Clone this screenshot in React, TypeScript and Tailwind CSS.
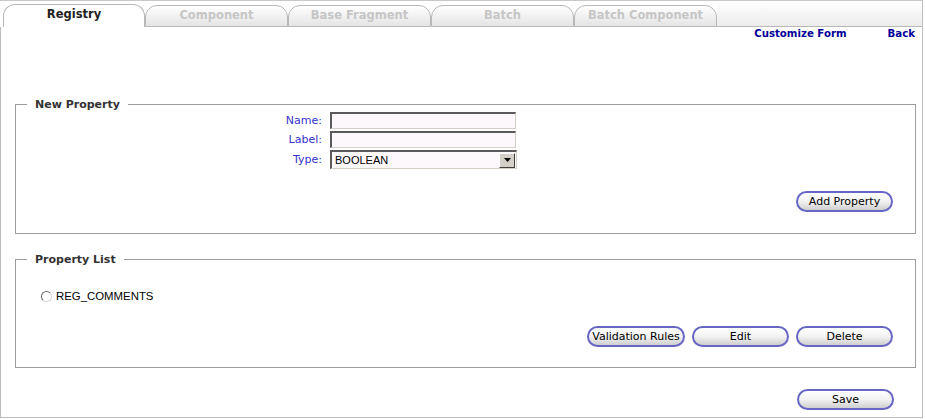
import React from "react";

const V = { fontFamily: '"DejaVu Sans", Verdana, sans-serif' };
const A = { fontFamily: '"Liberation Sans", Arial, sans-serif' };

function PillButton({ label, w = "w-[97px]" }: { label: string; w?: string }) {
  return (
    <button
      type="button"
      style={V}
      className={`${w} h-[21px] rounded-full border-2 border-[#6666c4] bg-gradient-to-b from-white via-[#f2f2f2] to-[#cfcfcf] text-[11px] leading-[13px] text-black flex items-center justify-center shadow-[inset_0_1px_0_#ffffff]`}
    >
      {label}
    </button>
  );
}

function Tab({ label, active }: { label: string; active?: boolean }) {
  if (active) {
    return (
      <div
        style={V}
        className="ml-[3px] w-[142px] h-[23px] rounded-t-[12px] border-t border-l border-r border-[#b8b8b8] bg-white flex items-center justify-center text-[11.5px] font-bold text-[#222] pb-[2px]"
      >
        {label}
      </div>
    );
  }
  return (
    <div
      style={V}
      className="w-[143px] h-[22px] rounded-t-[12px] border border-[#b8b8b8] bg-gradient-to-b from-white to-[#e4e4e4] flex items-center justify-center text-[11.5px] font-bold text-[#c6c6c6] pb-[1px]"
    >
      {label}
    </div>
  );
}

function Field({ select }: { select?: boolean }) {
  if (select) {
    return (
      <div className="w-[187px] h-[19px] border-t-2 border-l-2 border-b border-r border-t-[#5a5a5a] border-l-[#5a5a5a] border-b-[#d4d0c8] border-r-[#d4d0c8] bg-[#fcf8fc] flex items-center">
        <span style={A} className="flex-1 pl-[3px] text-[11px] leading-[13px] text-black">
          BOOLEAN
        </span>
        <div className="w-[16px] h-[15px] mr-[1px] bg-[#d4d0c8] border-t border-l border-t-white border-l-white border-b border-r border-b-[#404040] border-r-[#404040] flex items-center justify-center">
          <svg width="7" height="4" viewBox="0 0 7 4">
            <path d="M0 0H7L3.5 4Z" fill="#000" />
          </svg>
        </div>
      </div>
    );
  }
  return (
    <div className="w-[186px] h-[17px] border-t-2 border-l-2 border-b border-r border-t-[#5a5a5a] border-l-[#5a5a5a] border-b-[#d4d0c8] border-r-[#d4d0c8] bg-[#fcf8fc]" />
  );
}

export default function App() {
  return (
    <div className="w-[923px] h-[418px] flex flex-col bg-white border-r border-[#bdbdbd]">
      {/* tab strip */}
      <div className="h-[27px] flex items-end border-t border-[#c8c8c8]">
        <Tab label="Registry" active />
        <Tab label="Component" />
        <Tab label="Base Fragment" />
        <Tab label="Batch" />
        <Tab label="Batch Component" />
        <div className="flex-1 h-full border-b border-[#b8b8b8] bg-gradient-to-b from-white to-[#ececec]" />
      </div>

      {/* body */}
      <div className="flex-1 flex flex-col border-l border-b border-[#bdbdbd]">
        <div style={V} className="h-[13px] flex justify-end gap-[41px] pr-[7px] text-[10.2px] leading-[13px] font-bold text-[#000099]">
          <span>Customize Form</span>
          <span>Back</span>
        </div>

        <fieldset className="mt-[58px] ml-[14px] mr-[6px] border border-[#9c9c9c] flex flex-col">
          <legend style={V} className="ml-[11px] px-[8px] text-[11px] leading-[13px] font-bold text-[#333]">
            New Property
          </legend>
          <div className="mt-[1px] grid grid-cols-[306px_187px] gap-x-[8px] gap-y-[2px] items-center">
            <span style={V} className="text-right text-[11px] leading-[13px] text-[#3333cc]">Name:</span>
            <Field />
            <span style={V} className="text-right text-[11px] leading-[13px] text-[#3333cc]">Label:</span>
            <Field />
            <span style={V} className="text-right text-[11px] leading-[13px] text-[#3333cc]">Type:</span>
            <Field select />
          </div>
          <div className="mt-[22px] mb-[21px] mr-[22px] flex justify-end">
            <PillButton label="Add Property" />
          </div>
        </fieldset>

        <fieldset className="mt-[19px] ml-[14px] mr-[6px] border border-[#9c9c9c] flex flex-col">
          <legend style={V} className="ml-[11px] px-[8px] text-[11px] leading-[13px] font-bold text-[#333]">
            Property List
          </legend>
          <div className="mt-[24px] pl-[25px] flex items-center gap-[4px] h-[13px]">
            <div className="w-[11px] h-[11px] rounded-full border border-t-[#6a6a6a] border-l-[#6a6a6a] border-b-[#d8d8d8] border-r-[#d8d8d8] bg-white" />
            <span style={A} className="text-[11.4px] leading-[13px] text-black">REG_COMMENTS</span>
          </div>
          <div className="mt-[23px] mb-[20px] mr-[22px] flex justify-end gap-[7px]">
            <PillButton label="Validation Rules" w="w-[98px]" />
            <PillButton label="Edit" />
            <PillButton label="Delete" />
          </div>
        </fieldset>

        <div className="mt-[21px] mr-[28px] flex justify-end">
          <PillButton label="Save" />
        </div>
      </div>
    </div>
  );
}
